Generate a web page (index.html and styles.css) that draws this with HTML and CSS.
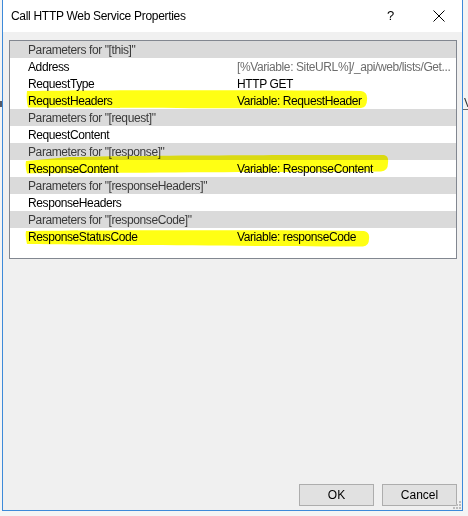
FILE: index.html
```html
<!DOCTYPE html>
<html>
<head>
<meta charset="utf-8">
<title>Call HTTP Web Service Properties</title>
<link rel="stylesheet" href="styles.css">
</head>
<body>
<div class="desk">
  <div class="edge-left"><span class="frag"></span></div>
  <div class="window">
    <div class="titlebar">
      <span class="title">Call HTTP Web Service Properties</span>
      <span class="help">?</span>
      <span class="close">
        <svg width="12" height="12" viewBox="0 0 12 12"><path d="M0.5 0.5 L11.5 11.5 M11.5 0.5 L0.5 11.5" stroke="#000" stroke-width="1" fill="none"/></svg>
      </span>
    </div>
    <div class="content">
      <div class="grid">
        <div class="row hdr"><span class="label">Parameters for "[this]"</span></div>
        <div class="row"><span class="label">Address</span><span class="value muted">[%Variable: SiteURL%]/_api/web/lists/Get...</span></div>
        <div class="row"><span class="label">RequestType</span><span class="value">HTTP GET</span></div>
        <div class="row"><span class="label">RequestHeaders</span><span class="value">Variable: RequestHeader</span></div>
        <div class="row hdr"><span class="label">Parameters for "[request]"</span></div>
        <div class="row"><span class="label">RequestContent</span></div>
        <div class="row hdr"><span class="label">Parameters for "[response]"</span></div>
        <div class="row"><span class="label">ResponseContent</span><span class="value">Variable: ResponseContent</span></div>
        <div class="row hdr"><span class="label">Parameters for "[responseHeaders]"</span></div>
        <div class="row"><span class="label">ResponseHeaders</span></div>
        <div class="row hdr"><span class="label">Parameters for "[responseCode]"</span></div>
        <div class="row"><span class="label">ResponseStatusCode</span><span class="value">Variable: responseCode</span></div>
        <svg class="marks" width="447" height="219" viewBox="0 0 447 219">
          <path d="M18,51 C100,50 250,50 352,51 Q359,52 358,60 Q358,67 352,68 C250,68.5 100,68 19,67.5 Q17,60 18,51 Z"/>
          <path d="M17,121 L60,117 C150,115 300,115 375,115 Q380,116 379,123 Q379,131 372,131.5 C250,132 100,133 18,133.5 Q16,127 17,121 Z"/>
          <path d="M17,191 C100,190 250,190 355,191 Q361,192 360,199 Q360,206 354,206.5 C250,206 100,205 18,204 Q16,197 17,191 Z"/>
        </svg>
      </div>
      <div class="buttons">
        <button class="btn">OK</button>
        <button class="btn">Cancel</button>
      </div>
    </div>
    <svg class="grip" width="9" height="9" viewBox="0 0 9 9">
      <rect x="7" y="1" width="2" height="2"/>
      <rect x="4" y="4" width="2" height="2"/><rect x="7" y="4" width="2" height="2"/>
      <rect x="1" y="7" width="2" height="2"/><rect x="4" y="7" width="2" height="2"/><rect x="7" y="7" width="2" height="2"/>
    </svg>
  </div>
  <div class="edge-right"><span class="v">V</span></div>
</div>
</body>
</html>
```
FILE: styles.css
```css
html, body {
  margin: 0;
  padding: 0;
}
body {
  background: #f4f4f4;
  font-family: "Liberation Sans", Arial, sans-serif;
  font-size: 12px;
  color: #000;
}
.desk {
  display: flex;
  width: 468px;
  height: 516px;
  overflow: hidden;
}
.edge-left {
  width: 2px;
  flex: none;
  padding-top: 101px;
  box-sizing: border-box;
}
.frag {
  display: block;
  width: 2px;
  height: 6px;
  background: #555a66;
}
.window {
  position: relative;
  flex: none;
  width: 461px;
  height: 511px;
  box-sizing: border-box;
  border: 1px solid #3d8ad9;
  border-top: none;
  display: flex;
  flex-direction: column;
  background: #f0f0f0;
}
.titlebar {
  height: 32px;
  flex: none;
  background: #fff;
  display: flex;
  align-items: center;
  padding-left: 8px;
  box-sizing: border-box;
}
.title {
  font-size: 12px;
  letter-spacing: -0.3px;
  color: #000;
  flex: 1;
  padding-bottom: 1px;
}
.help {
  font-size: 13px;
  width: 10px;
  margin-right: 36px;
  padding-bottom: 1px;
}
.close {
  width: 12px;
  height: 12px;
  margin-right: 17px;
  display: flex;
}
.content {
  flex: 1;
  display: flex;
  flex-direction: column;
  padding: 8px 5px 4px 6px;
}
.grid {
  position: relative;
  height: 219px;
  box-sizing: border-box;
  border: 1px solid #828790;
  background: #fff;
}
.row {
  height: 17px;
  display: flex;
  align-items: center;
  white-space: nowrap;
  overflow: hidden;
  letter-spacing: -0.4px;
}
.row.hdr {
  background: #dadada;
  color: #3a3a3a;
}
.label {
  width: 227px;
  flex: none;
  box-sizing: border-box;
  padding-left: 18px;
}
.value {
  flex: 1;
  min-width: 0;
  overflow: hidden;
  text-overflow: ellipsis;
}
.value.muted {
  color: #6d6d6d;
}
.marks {
  position: absolute;
  left: -1px;
  top: -1px;
  pointer-events: none;
  mix-blend-mode: multiply;
  fill: #ffff14;
}
.buttons {
  margin-top: auto;
  display: flex;
  justify-content: flex-end;
  gap: 8px;
}
.btn {
  width: 75px;
  height: 22px;
  box-sizing: border-box;
  background: #e1e1e1;
  border: 1px solid #adadad;
  font-family: "Liberation Sans", Arial, sans-serif;
  font-size: 12px;
  color: #000;
  padding: 0;
  margin: 0;
}
.grip {
  position: absolute;
  right: 1px;
  bottom: 1px;
  fill: #bcbcbc;
}
.edge-right {
  flex: 1;
  padding-top: 97px;
  box-sizing: border-box;
}
.v {
  display: block;
  font-size: 12px;
  color: #333;
  border-bottom: 1px solid #6a6a6a;
  line-height: 12px;
  padding-left: 1px;
}
```
